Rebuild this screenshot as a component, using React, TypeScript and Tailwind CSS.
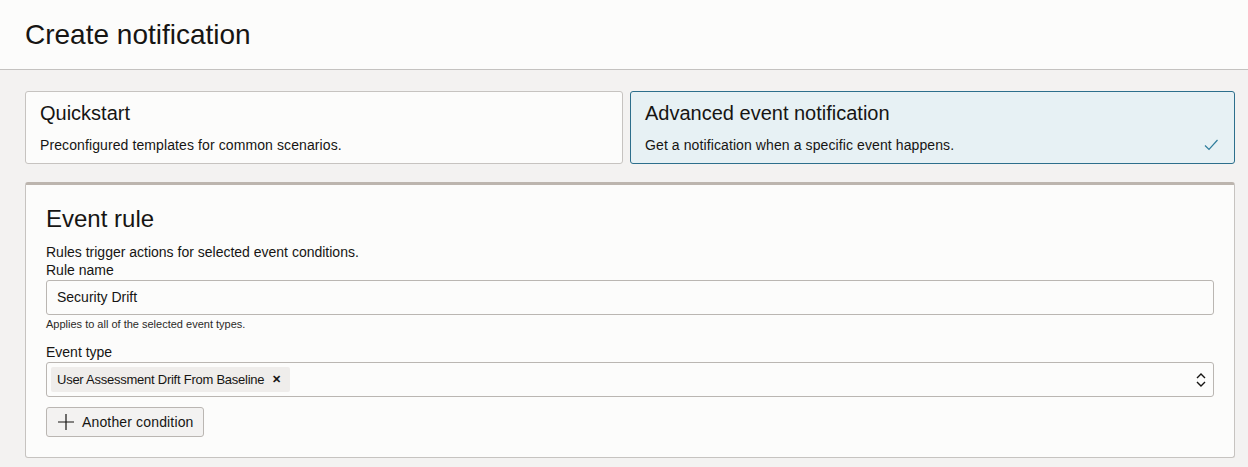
import React from 'react';

function CheckIcon() {
  return (
    <svg width="16" height="16" viewBox="0 0 16 16" fill="none" className="text-[#2f7d9c]">
      <path d="M2 8.5 L6 12.5 L14.5 3" stroke="currentColor" strokeWidth="1.2" />
    </svg>
  );
}

function UpDownIcon() {
  return (
    <svg width="12" height="16" viewBox="0 0 12 16" fill="none" className="text-[#161513]">
      <path d="M2 6 L6 2 L10 6" stroke="currentColor" strokeWidth="1.4" />
      <path d="M2 10 L6 14 L10 10" stroke="currentColor" strokeWidth="1.4" />
    </svg>
  );
}

function PlusIcon() {
  return (
    <svg width="18" height="18" viewBox="0 0 18 18" fill="none" className="text-[#161513]">
      <path d="M9 1 V17 M1 9 H17" stroke="currentColor" strokeWidth="1.2" />
    </svg>
  );
}

function App() {
  return (
    <div className="min-h-[467px] bg-[#f3f2f1] text-[#161513] font-['Liberation_Sans',Arial,sans-serif]">
      {/* Header */}
      <div className="h-[70px] bg-[#fcfcfb] border-b border-[#c4c2c0] flex items-center px-[25px]">
        <h1 className="text-[28px] leading-none">Create notification</h1>
      </div>

      <div className="pl-[25px] pr-[13px] pt-[21px] pb-[9px]">
        {/* Mode cards */}
        <div className="flex gap-[7px]">
          <div className="w-[598px] h-[73px] bg-[#fcfcfb] border border-[#c6c3c0] rounded-[3px] px-[14px] pt-[9px]">
            <div className="text-[20px] leading-[24px]">Quickstart</div>
            <div className="text-[14px] tracking-[0.1px] leading-[16px] mt-[12px]">Preconfigured templates for common scenarios.</div>
          </div>
          <div className="flex-1 h-[73px] bg-[#e7f1f4] border border-[#2d6f8c] rounded-[3px] pl-[14px] pr-[15px] pt-[9px]">
            <div className="text-[20px] leading-[24px]">Advanced event notification</div>
            <div className="flex items-center justify-between mt-[12px]">
              <span className="text-[14px] tracking-[0.1px] leading-[16px]">Get a notification when a specific event happens.</span>
              <CheckIcon />
            </div>
          </div>
        </div>

        {/* Event rule panel */}
        <div className="mt-[18px] bg-[#fcfcfb] border border-[#c6c3c0] border-t-[3px] border-t-[#bcb5ae] rounded-[3px] px-[20px] pt-[20px] pb-[20px]">
          <h2 className="text-[24px] leading-[28px]">Event rule</h2>
          <p className="text-[14px] leading-[18px] mt-[10px]">Rules trigger actions for selected event conditions.</p>
          <label className="block text-[14px] leading-[18px]">Rule name</label>
          <div className="mt-[1px] h-[35px] border border-[#bab6b2] rounded-[3px] bg-[#fcfcfb] flex items-center px-[10px] text-[14px]">
            Security Drift
          </div>
          <p className="text-[11px] leading-[14px] mt-[2px] text-[#2b2a28]">Applies to all of the selected event types.</p>
          <label className="block text-[14px] leading-[18px] mt-[12px]">Event type</label>
          <div className="mt-[1px] h-[35px] border border-[#bab6b2] rounded-[3px] bg-[#fcfcfb] flex items-center justify-between pl-[4px] pr-[6px]">
            <span className="h-[25px] bg-[#efedeb] rounded-[2px] flex items-center pl-[6px] pr-[9px] text-[13px] tracking-[-0.25px]">
              User Assessment Drift From Baseline
              <span className="ml-[8px] text-[11px] font-bold">✕</span>
            </span>
            <UpDownIcon />
          </div>
          <button className="mt-[10px] h-[30px] border border-[#bab6b2] rounded-[3px] bg-[#f3f2f1] flex items-center gap-[7px] pl-[10px] pr-[9px] text-[14px] tracking-[0.15px]">
            <PlusIcon />
            Another condition
          </button>
        </div>
      </div>
    </div>
  );
}

export default App;
